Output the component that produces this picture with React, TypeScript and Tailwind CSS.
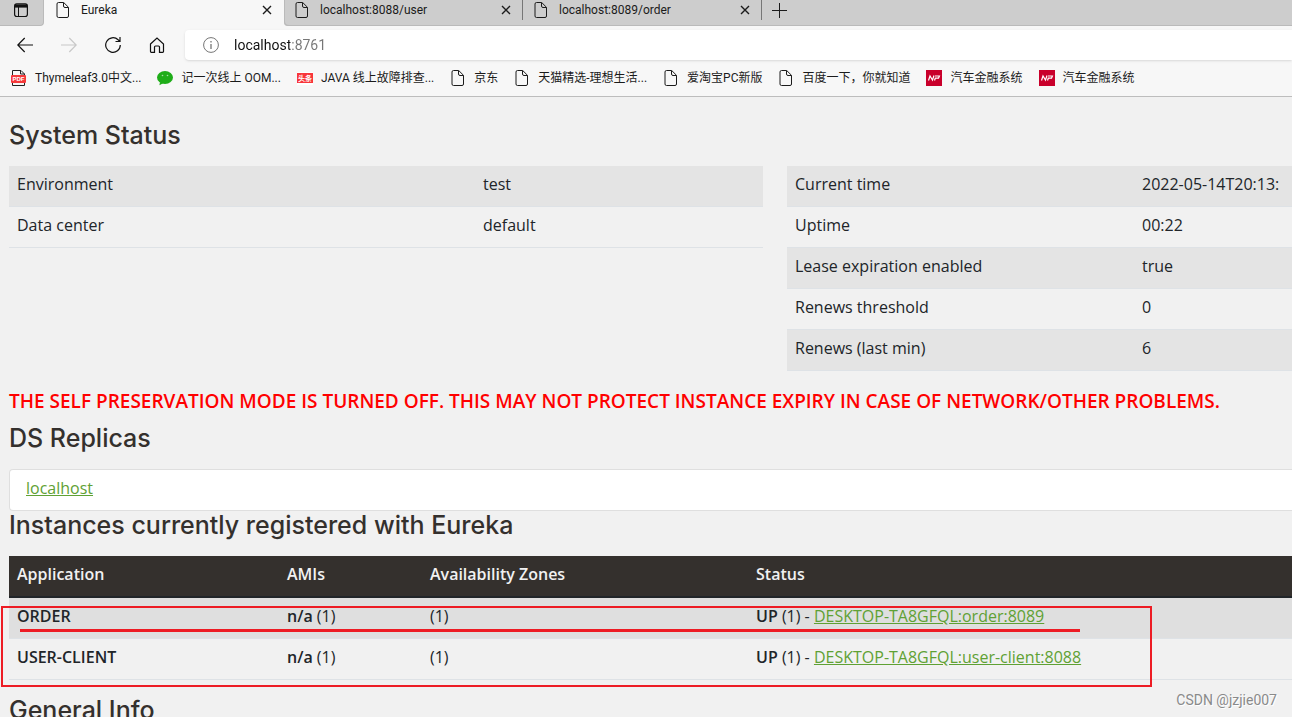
import React from "react";
import clsx from "clsx";

type tBookmark = {
  label: string;
  icon: "file" | "pdf" | "wechat" | "toutiao" | "np";
};

const tabs = ["localhost:8088/user", "localhost:8089/order"];

const bookmarks: tBookmark[] = [
  { label: "Thymeleaf3.0中文...", icon: "pdf" },
  { label: "记一次线上 OOM...", icon: "wechat" },
  { label: "JAVA 线上故障排查...", icon: "toutiao" },
  { label: "京东", icon: "file" },
  { label: "天猫精选-理想生活...", icon: "file" },
  { label: "爱淘宝PC新版", icon: "file" },
  { label: "百度一下，你就知道", icon: "file" },
  { label: "汽车金融系统", icon: "np" },
  { label: "汽车金融系统", icon: "np" },
];

const environment = [
  ["Environment", "test"],
  ["Data center", "default"],
];

const status = [
  ["Current time", "2022-05-14T20:13:"],
  ["Uptime", "00:22"],
  ["Lease expiration enabled", "true"],
  ["Renews threshold", "0"],
  ["Renews (last min)", "6"],
];

const instances = [
  { app: "ORDER", link: "DESKTOP-TA8GFQL:order:8089" },
  { app: "USER-CLIENT", link: "DESKTOP-TA8GFQL:user-client:8088" },
];

function FileIcon() {
  return (
    <svg className="size-4 shrink-0" viewBox="0 0 16 16" fill="none" stroke="#1b1b1b">
      <path d="M3.5.5h5.2l4.8 4.8v8.7a1.5 1.5 0 0 1-1.5 1.5H3.5a1.5 1.5 0 0 1-1.5-1.5V2A1.5 1.5 0 0 1 3.5.5z" />
      <path d="M8.5.7V4A1.5 1.5 0 0 0 10 5.5h3.3" />
    </svg>
  );
}

function CloseIcon() {
  return (
    <svg className="size-[10px]" viewBox="0 0 10 10" stroke="#1b1b1b" strokeWidth="1.4">
      <path d="M1 1l8 8M9 1L1 9" />
    </svg>
  );
}

function BookmarkIcon({ icon }: { icon: tBookmark["icon"] }) {
  if (icon === "pdf") {
    return (
      <svg className="size-4 shrink-0" viewBox="0 0 16 16">
        <path d="M1.5 5V.5H10L13.500 4v1M1.500 12v3.500h12V12M9.500.5V4h4" fill="none" stroke="#222" />
        <rect y="5" width="15" height="8" rx="1" fill="#f5393b" />
        <text x="7.500" y="11.200" fontSize="6" fontWeight="700" fill="#fff" textAnchor="middle" fontFamily="Liberation Sans, sans-serif">
          PDF
        </text>
      </svg>
    );
  }
  if (icon === "wechat") {
    return (
      <svg className="size-4 shrink-0" viewBox="0 0 16 16" fill="#1fad19">
        <ellipse cx="8" cy="7.500" rx="8" ry="6.500" />
        <path d="M3 12l-.6 3.200L6.500 13z" />
        <circle cx="5.500" cy="5.500" r=".8" fill="#a5dfa2" />
        <circle cx="10.500" cy="5.500" r=".8" fill="#a5dfa2" />
      </svg>
    );
  }
  if (icon === "toutiao") {
    return (
      <svg className="size-4 shrink-0" viewBox="0 0 16 16">
        <rect y="2" width="16" height="13" fill="#fff" />
        <rect y="3" width="16" height="10" fill="#f8353a" />
        <text x="8" y="10.600" fontSize="7" fontWeight="700" fill="#fff" textAnchor="middle" fontFamily="Noto Sans CJK SC, sans-serif">
          头条
        </text>
      </svg>
    );
  }
  if (icon === "np") {
    return (
      <svg className="size-4 shrink-0" viewBox="0 0 16 16">
        <rect width="16" height="16" fill="#c9002b" />
        <path d="M2.500 10.500L4 6l2.500 4L8 5.500M8.500 10.500l.8-2.300h3.200l.9-2.200H9" fill="none" stroke="#fff" strokeWidth="1.200" />
      </svg>
    );
  }
  return <FileIcon />;
}

function BrowserChrome() {
  return (
    <header className="border-b border-[#bdbdbd] bg-[#f7f7f7] font-['Roboto','Noto_Sans_CJK_SC',sans-serif] text-xs text-[#1b1b1b]">
      <div className="flex h-[26px]">
        <button aria-label="Tab actions" className="flex w-11 shrink-0 items-start rounded-br border-r border-b border-[#bababa] bg-[#cdcdcd] pt-[3px] pl-[14px]">
          <svg className="h-[15px] w-[14px]" viewBox="0 0 14 15" fill="none" stroke="#111">
            <rect x=".6" y=".9" width="12.800" height="12.600" rx="2.200" strokeWidth="1.200" />
            <path d="M1 3h12" strokeWidth="3.200" />
            <path d="M4.500 4v9" />
          </svg>
        </button>
        <div className="flex w-60 shrink-0 items-center pr-3 pb-1.5 pl-[11px]">
          <FileIcon />
          <span className="ml-[10px] flex-1">Eureka</span>
          <button aria-label="Close tab">
            <CloseIcon />
          </button>
        </div>
        <div className="flex flex-1 rounded-bl bg-[#cdcdcd] pb-1.5 shadow-[inset_1px_-1px_0_#bababa]">
          {tabs.map((tab) => (
            <div key={tab} className="flex w-[239px] shrink-0 items-center border-r border-[#777] pr-[11px] pl-[10px]">
              <FileIcon />
              <span className="ml-[10px] flex-1">{tab}</span>
              <button aria-label="Close tab">
                <CloseIcon />
              </button>
            </div>
          ))}
          <button aria-label="New tab" className="px-[10px]">
            <svg className="size-[15px]" viewBox="0 0 15 15" stroke="#1b1b1b">
              <path d="M7.500 0v15M0 7.500h15" />
            </svg>
          </button>
        </div>
      </div>

      <div className="flex h-[34px] items-end pl-[3px]">
        <button aria-label="Back" className="flex h-[30px] w-11 items-center justify-center">
          <svg className="size-4" viewBox="0 0 16 16" fill="none" stroke="#111" strokeWidth="1.200">
            <path d="M16 8H1M7.700 1L.8 8l6.900 7" />
          </svg>
        </button>
        <button aria-label="Forward" className="flex h-[30px] w-11 items-center justify-center">
          <svg className="size-4" viewBox="0 0 16 16" fill="none" stroke="#c8c8c8" strokeWidth="1.200">
            <path d="M0 8h15M8.300 1l6.900 7-6.900 7" />
          </svg>
        </button>
        <button aria-label="Refresh" className="flex h-[30px] w-11 items-center justify-center">
          <svg className="size-4" viewBox="0 0 16 16" fill="none" stroke="#111" strokeWidth="1.200">
            <path d="M15.300 8a7.300 7.300 0 1 1-2.200-5.200L15 4.500M15 0v4.500h-4.500" />
          </svg>
        </button>
        <button aria-label="Home" className="flex h-[30px] w-11 items-center justify-center">
          <svg className="size-4" viewBox="0 0 16 16" fill="none" stroke="#111" strokeWidth="1.200">
            <path d="M1.500 7L8 1l6.500 6v7.500a.8.8 0 0 1-.8.8H10.500V10a1 1 0 0 0-1-1h-3a1 1 0 0 0-1 1v5.300H2.300a.8.8 0 0 1-.8-.8z" />
          </svg>
        </button>
        <label className="ml-1.5 flex h-[30px] flex-1 items-center rounded-l bg-white pl-[18px] shadow-sm">
          <svg className="size-4" viewBox="0 0 16 16" fill="none" stroke="#767676">
            <circle cx="8" cy="8" r="7.400" />
            <path d="M8 7v5M8 4v1.500" strokeWidth="1.300" />
          </svg>
          <input
            aria-label="Address"
            className="ml-[15px] flex-1 bg-[linear-gradient(to_right,#111_56px,#767676_56px)] bg-clip-text text-sm text-transparent outline-none"
            defaultValue="localhost:8761"
          />
        </label>
      </div>

      <nav className="flex h-9 items-center gap-4 overflow-hidden pl-[11px]">
        {bookmarks.map(({ label, icon }, i) => (
          <a key={i} href="#" className="flex shrink-0 items-center gap-2">
            <BookmarkIcon icon={icon} />
            {label}
          </a>
        ))}
      </nav>
    </header>
  );
}

function Heading({ children }: { children: React.ReactNode }) {
  return (
    <h1 className="mb-4 font-['Inter',sans-serif] text-[25px] leading-[29px] font-medium whitespace-nowrap text-[#34302d]">
      {children}
    </h1>
  );
}

function StatusTable({ rows, labelWidth }: { rows: string[][]; labelWidth: string }) {
  return (
    <table className="mb-4 w-full table-fixed text-left">
      <tbody>
        {rows.map(([name, value]) => (
          <tr key={name} className="border-b border-[#dee2e6] odd:bg-[#e4e4e4]">
            <th scope="row" className={clsx("px-2 pt-1.5 pb-[10px] font-normal", labelWidth)}>
              {name}
            </th>
            <td className="overflow-hidden px-2 pt-1.5 pb-[10px] whitespace-nowrap">{value}</td>
          </tr>
        ))}
      </tbody>
    </table>
  );
}

export default function App() {
  return (
    <div className="relative flex h-screen flex-col overflow-hidden bg-[#f1f1f1]">
      <BrowserChrome />

      <main className="min-h-0 flex-1 overflow-hidden pt-6 pl-[9px] font-['Open_Sans',sans-serif] text-base text-[#212529]">
        <Heading>System Status</Heading>
        <div className="grid grid-cols-[754fr_505fr] items-start gap-6 overflow-hidden">
          <StatusTable rows={environment} labelWidth="w-[466px]" />
          <StatusTable rows={status} labelWidth="w-[347px]" />
        </div>

        <h4 className="mb-2 text-[19px] leading-[29px] font-semibold whitespace-nowrap text-[#ff0000]">
          THE SELF PRESERVATION MODE IS TURNED OFF. THIS MAY NOT PROTECT INSTANCE EXPIRY IN CASE OF NETWORK/OTHER PROBLEMS.
        </h4>

        <Heading>DS Replicas</Heading>
        <ul>
          <li className="rounded-l border border-r-0 border-[#dfdfdf] bg-white px-4 pt-1.5 pb-[10px]">
            <a href="#" className="text-[#5fa134] underline">
              localhost
            </a>
          </li>
        </ul>

        <Heading>Instances currently registered with Eureka</Heading>
        <div className="relative mb-4">
          <table className="w-full table-fixed text-left">
            <thead>
              <tr className="border-b-2 border-[#212529] bg-[#34302d] text-[#f1f1f1]">
                <th className="w-[270px] px-2 pt-1.5 pb-[10px] font-semibold">Application</th>
                <th className="w-[143px] px-2 pt-1.5 pb-[10px] font-semibold">AMIs</th>
                <th className="w-[326px] px-2 pt-1.5 pb-[10px] font-semibold">Availability Zones</th>
                <th className="px-2 pt-1.5 pb-[10px] font-semibold">Status</th>
              </tr>
            </thead>
            <tbody>
              {instances.map(({ app, link }) => (
                <tr key={app} className="border-b border-[#dee2e6] odd:bg-[#dfdfdf]">
                  <td className="px-2 pt-1.5 pb-[10px] font-semibold">{app}</td>
                  <td className="px-2 pt-1.5 pb-[10px]">
                    <b className="font-semibold">n/a</b> (1)
                  </td>
                  <td className="px-2 pt-1.5 pb-[10px]">(1)</td>
                  <td className="px-2 pt-1.5 pb-[10px] whitespace-nowrap">
                    <b className="font-semibold">UP</b> (1) -{" "}
                    <a href="#" className="text-[#5fa134] underline">
                      {link}
                    </a>
                  </td>
                </tr>
              ))}
            </tbody>
          </table>
          {/* red marker over the registered instances */}
          <div className="pointer-events-none absolute top-[50px] -left-2 h-[81px] w-[1151px] border-2 border-[#ed1c24]" />
          <div className="pointer-events-none absolute top-[73px] left-[11px] h-[3px] w-[1060px] bg-[#ed1c24]" />
        </div>

        <Heading>General Info</Heading>
      </main>

      <p className="absolute right-[15px] bottom-[7px] font-['Roboto',sans-serif] text-sm text-[#8a8a8a] [text-shadow:1px_1px_0_#fff]">
        CSDN @jzjie007
      </p>
    </div>
  );
}
